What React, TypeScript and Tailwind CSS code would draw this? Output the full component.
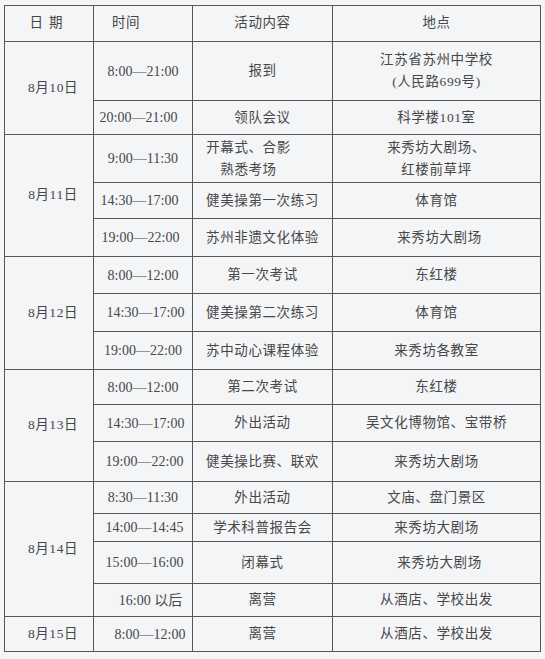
import React from 'react';

type Item = {
  time: string;
  timeCls?: string;
  act: string[];
  actCls?: string;
  place: string[];
  placeCls?: string;
  h: string;
};

type Day = { date: string; items: Item[] };

// schedule data, row heights taken from the scan
const days: Day[] = [
  {
    date: '8月10日',
    items: [
      { time: '8:00—21:00', act: ['报到'], place: ['江苏省苏州中学校', '(人民路699号)'], h: 'h-[59px]' },
      { time: '20:00—21:00', timeCls: 'pr-[9px]', act: ['领队会议'], place: ['科学楼101室'], h: 'h-[34px]' },
    ],
  },
  {
    date: '8月11日',
    items: [
      { time: '9:00—11:30', act: ['开幕式、合影', '熟悉考场'], actCls: 'pr-[28px]', place: ['来秀坊大剧场、', '红楼前草坪'], h: 'h-[48px]' },
      { time: '14:30—17:00', timeCls: 'pr-[7px]', act: ['健美操第一次练习'], place: ['体育馆'], h: 'h-[36px]' },
      { time: '19:00—22:00', timeCls: 'pr-[5px]', act: ['苏州非遗文化体验'], place: ['来秀坊大剧场'], placeCls: 'pl-[6px]', h: 'h-[38px]' },
    ],
  },
  {
    date: '8月12日',
    items: [
      { time: '8:00—12:00', act: ['第一次考试'], place: ['东红楼'], h: 'h-[37px]' },
      { time: '14:30—17:00', timeCls: 'pl-[5px]', act: ['健美操第二次练习'], place: ['体育馆'], h: 'h-[38px]' },
      { time: '19:00—22:00', act: ['苏中动心课程体验'], place: ['来秀坊各教室'], h: 'h-[38px]' },
    ],
  },
  {
    date: '8月13日',
    items: [
      { time: '8:00—12:00', act: ['第二次考试'], place: ['东红楼'], h: 'h-[35px]' },
      { time: '14:30—17:00', timeCls: 'pl-[5px]', act: ['外出活动'], place: ['吴文化博物馆、宝带桥'], h: 'h-[37px]' },
      { time: '19:00—22:00', timeCls: 'pl-[3px]', act: ['健美操比赛、联欢'], place: ['来秀坊大剧场'], h: 'h-[40px]' },
    ],
  },
  {
    date: '8月14日',
    items: [
      { time: '8:30—11:30', act: ['外出活动'], place: ['文庙、盘门景区'], h: 'h-[32px]' },
      { time: '14:00—14:45', timeCls: 'pl-[3px]', act: ['学术科普报告会'], place: ['来秀坊大剧场'], h: 'h-[28px]' },
      { time: '15:00—16:00', timeCls: 'pl-[3px]', act: ['闭幕式'], place: ['来秀坊大剧场'], placeCls: 'pl-[6px]', h: 'h-[42px]' },
      { time: '16:00 以后', timeCls: 'pl-[15px]', act: ['离营'], place: ['从酒店、学校出发'], h: 'h-[33px]' },
    ],
  },
  {
    date: '8月15日',
    items: [
      { time: '8:00—12:00', timeCls: 'pl-[14px]', act: ['离营'], place: ['从酒店、学校出发'], h: 'h-[35px]' },
    ],
  },
];

const cell = 'border border-[#585858] text-center align-middle p-0';

const Lines: React.FC<{ lines: string[] }> = ({ lines }) => (
  <>
    {lines.map((l) => (
      <div key={l} className="leading-[22px]">
        {l}
      </div>
    ))}
  </>
);

export default function App() {
  return (
    <div className="min-h-[659px] w-[545px] bg-[#f3f5f7] pt-[5px] pl-[4px] text-[#474747] text-[13.5px] tracking-[0.6px] [font-family:'Liberation_Serif','Noto_Sans_CJK_SC',serif]">
      <table className="w-[536px] table-fixed border-collapse">
        <colgroup>
          <col className="w-[89px]" />
          <col className="w-[99px]" />
          <col className="w-[140px]" />
          <col className="w-[208px]" />
        </colgroup>
        <thead>
          <tr className="h-[36px]">
            <th className={`${cell} font-normal`}>
              <span className="tracking-[6px]">日期</span>
            </th>
            <th className={`${cell} font-normal pr-[34px]`}>时间</th>
            <th className={`${cell} font-normal`}>活动内容</th>
            <th className={`${cell} font-normal`}>地点</th>
          </tr>
        </thead>
        <tbody>
          {days.map((day) =>
            day.items.map((it, i) => (
              <tr key={day.date + it.time} className={it.h}>
                {i === 0 && (
                  <td rowSpan={day.items.length} className={`${cell} pl-[8px]`}>
                    {day.date}
                  </td>
                )}
                <td className={`${cell} tracking-normal text-[14px] ${it.timeCls ?? ''}`}>{it.time}</td>
                <td className={`${cell} ${it.actCls ?? ''}`}>
                  <Lines lines={it.act} />
                </td>
                <td className={`${cell} ${it.placeCls ?? ''}`}>
                  <Lines lines={it.place} />
                </td>
              </tr>
            ))
          )}
        </tbody>
      </table>
    </div>
  );
}
